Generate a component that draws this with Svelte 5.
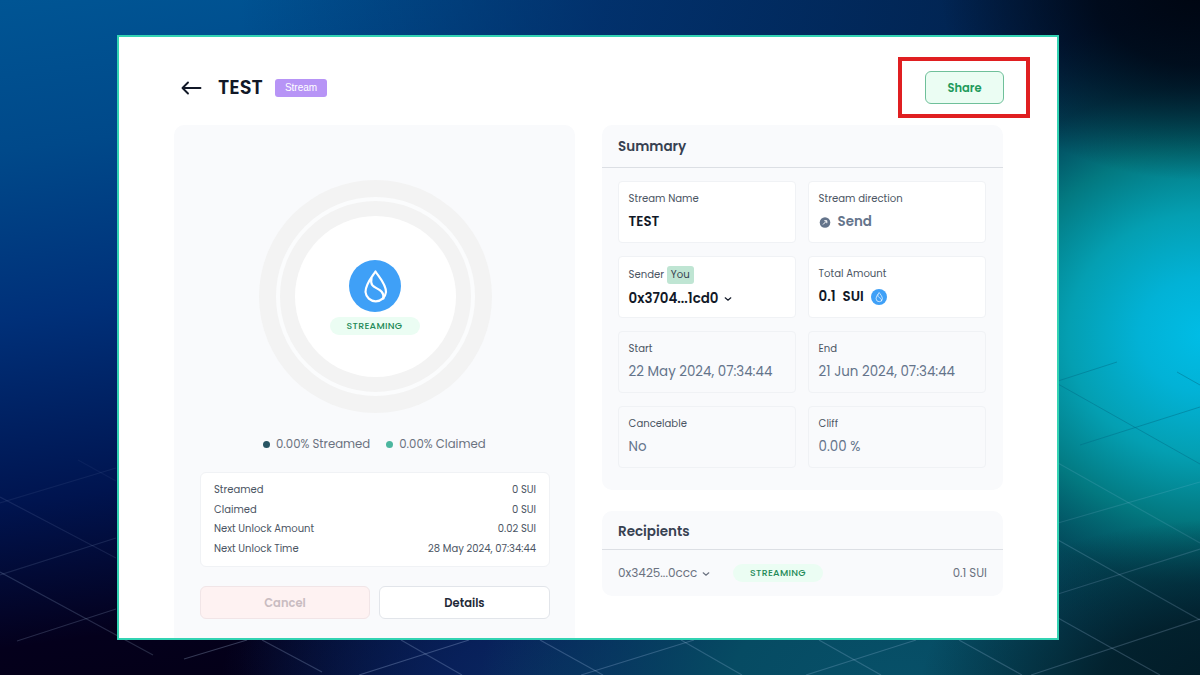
<script lang="ts">
  const details = [
    { label: "Streamed", value: "0 SUI" },
    { label: "Claimed", value: "0 SUI" },
    { label: "Next Unlock Amount", value: "0.02 SUI" },
    { label: "Next Unlock Time", value: "28 May 2024, 07:34:44" },
  ];

  const schedule = [
    { label: "Start", value: "22 May 2024, 07:34:44" },
    { label: "End", value: "21 Jun 2024, 07:34:44" },
    { label: "Cancelable", value: "No" },
    { label: "Cliff", value: "0.00 %" },
  ];

  // floor grid of the backdrop, fading out towards the horizon
  const gridLines = [
    [0, 503, 116, 468, 0.07],
    [0, 575, 116, 538, 0.12],
    [17, 641, 116, 609, 0.18],
    [78, 460, 116, 481, 0.05],
    [0, 497, 116, 558, 0.1],
    [0, 572, 153, 655, 0.18],
    [262, 640, 322, 672, 0.22],
    [401, 640, 462, 675, 0.22],
    [540, 640, 603, 675, 0.22],
    [681, 640, 742, 675, 0.2],
    [819, 640, 881, 675, 0.2],
    [959, 640, 1022, 675, 0.2],
    [184, 659, 247, 640, 0.25],
    [359, 675, 469, 640, 0.25],
    [581, 675, 694, 640, 0.22],
    [806, 675, 916, 640, 0.2],
    [1031, 675, 1200, 619, 0.2],
    [1058, 523, 1200, 482, 0.12],
    [1058, 594, 1200, 549, 0.16],
    [1058, 463, 1200, 543, 0.12],
    [1058, 540, 1200, 620, 0.18],
    [1058, 618, 1160, 675, 0.2],
  ];
  const darkLines = [
    [1058, 381, 1117, 362],
    [1080, 445, 1200, 407],
    [1058, 384, 1200, 464],
    [1177, 372, 1200, 385],
  ];
</script>

{#snippet suiLogo(size)}
  <svg width={size} height={size} viewBox="0 0 52 52" fill="none">
    <circle cx="26" cy="26" r="26" fill="#3fa0f7" />
    <path
      d="M26.500 11.500C23 17 16.500 24 16.500 32A10.300 10.300 0 0 0 37 32C37 24 30 17 26.500 11.500Z"
      stroke="#fff"
      stroke-width="2.200"
      stroke-linejoin="round"
    />
    <path
      d="M22.500 18.500C19.500 31 35.500 25.500 34.500 38.500"
      stroke="#fff"
      stroke-width="2.200"
      stroke-linecap="round"
    />
  </svg>
{/snippet}

{#snippet chevron()}
  <svg class="chevron" width="8" height="6" viewBox="0 0 8 6" fill="none">
    <path d="M1.200 1.800L4 4.300L6.800 1.800" stroke="currentColor" stroke-width="1.200" stroke-linecap="round" />
  </svg>
{/snippet}

<div class="stage">
  <svg class="grid-lines" width="1200" height="675" viewBox="0 0 1200 675">
    {#each gridLines as [x1, y1, x2, y2, opacity]}
      <line {x1} {y1} {x2} {y2} stroke="#c4dcff" stroke-opacity={opacity} stroke-width="1.200" />
    {/each}
    {#each darkLines as [x1, y1, x2, y2]}
      <line {x1} {y1} {x2} {y2} stroke="#006b85" stroke-opacity="0.45" />
    {/each}
  </svg>

  <div class="window">
    <header>
      <svg width="21" height="14" viewBox="0 0 21 14" fill="none">
        <path d="M7 1.500L1.500 7L7 12.500M1.800 7H19.500" stroke="#111827" stroke-width="1.900" stroke-linecap="round" stroke-linejoin="round" />
      </svg>
      <h1>TEST</h1>
      <span class="badge">Stream</span>
      <div class="share-wrap">
        <button class="share">Share</button>
        <div class="highlight"></div>
      </div>
    </header>

    <main>
      <section class="card progress">
        <div class="ring">
          <div class="ring-inner">
            <div class="ring-center">
              {@render suiLogo(52)}
              <span class="pill">STREAMING</span>
            </div>
          </div>
        </div>
        <div class="legend">
          <span><i class="dot streamed"></i>0.00% Streamed</span>
          <span><i class="dot claimed"></i>0.00% Claimed</span>
        </div>
        <div class="details">
          {#each details as row}
            <div class="row">
              <span>{row.label}</span>
              <span class="amount">{row.value}</span>
            </div>
          {/each}
        </div>
        <div class="actions">
          <button class="cancel">Cancel</button>
          <button class="more">Details</button>
        </div>
      </section>

      <div class="right">
        <section class="card summary">
          <h2>Summary</h2>
          <div class="cells">
            <div class="cell white">
              <div class="label">Stream Name</div>
              <div class="strong">TEST</div>
            </div>
            <div class="cell white">
              <div class="label">Stream direction</div>
              <div class="strong send">
                <svg width="12" height="12" viewBox="0 0 12 12" fill="none">
                  <circle cx="6" cy="6.500" r="5.300" fill="#64748b" />
                  <path d="M4 8.500L7.500 5M5.300 4.700H7.800V7.200" stroke="#fff" stroke-width="1" />
                </svg>
                Send
              </div>
            </div>
            <div class="cell white sender">
              <div class="label">Sender <span class="you">You</span></div>
              <div class="strong address">0x3704...1cd0 {@render chevron()}</div>
            </div>
            <div class="cell white">
              <div class="label">Total Amount</div>
              <div class="strong total"><span>0.1</span><span>SUI</span>{@render suiLogo(16)}</div>
            </div>
            {#each schedule as item}
              <div class="cell">
                <div class="label">{item.label}</div>
                <div class="plain">{item.value}</div>
              </div>
            {/each}
          </div>
        </section>

        <section class="card recipients">
          <h2>Recipients</h2>
          <div class="recipient">
            <span class="wallet">0x3425...0ccc {@render chevron()}</span>
            <span class="pill">STREAMING</span>
            <span class="sum">0.1 SUI</span>
          </div>
        </section>
      </div>
    </main>
  </div>
</div>

<style>
  :global(body) {
    margin: 0;
    overflow: hidden;
  }
  .stage {
    box-sizing: border-box;
    position: relative;
    width: 1200px;
    height: 675px;
    padding: 35px 0 0 117px;
    overflow: hidden;
    font-family: Poppins, Inter, sans-serif;
    color: #4b5563;
    background:
      radial-gradient(ellipse 260px 190px at 1200px -10px, #000611 0%, rgba(0, 7, 20, 0.85) 40%, rgba(0, 8, 24, 0) 100%),
      radial-gradient(ellipse 300px 170px at 1220px 690px, #021c27 0%, rgba(2, 28, 38, 0.85) 40%, rgba(2, 30, 40, 0) 100%),
      radial-gradient(ellipse 360px 320px at 1205px 335px, #00bde6 0%, #02b2d6 18%, #049fb2 38%, rgba(3, 130, 134, 0.9) 58%, rgba(2, 95, 98, 0.5) 78%, rgba(2, 70, 80, 0) 100%),
      radial-gradient(ellipse 420px 220px at 900px 680px, #075068 0%, #064b63 40%, rgba(6, 60, 90, 0) 100%),
      radial-gradient(ellipse 320px 200px at 540px 690px, #09285f 0%, rgba(9, 34, 95, 0.85) 30%, rgba(9, 34, 95, 0) 100%),
      linear-gradient(90deg, rgba(2, 36, 95, 0) 20%, rgba(2, 42, 100, 0.8) 50%, rgba(1, 30, 70, 0.95) 92%),
      linear-gradient(172deg, #005594 0%, #00498a 18%, #003079 38%, #00144f 60%, #04001c 77%, #03000f 100%);
  }
  .grid-lines {
    position: absolute;
    left: 0;
    top: 0;
  }
  .window {
    box-sizing: border-box;
    position: relative;
    width: 941.5px;
    height: 605px;
    padding: 34px 52.5px 0 55px;
    border: 2px solid #33d3b3;
    overflow: hidden;
    background: #fff;
  }
  header {
    display: flex;
    align-items: center;
    height: 33px;
    padding-left: 7px;
  }
  h1 {
    margin: 0 10px 0 16px;
    width: 47px;
    font-size: 19.5px;
    line-height: 30px;
    font-weight: 600;
    color: #111827;
  }
  .badge {
    width: 52px;
    height: 18px;
    border-radius: 3px;
    background: #b794f6;
    color: #fff;
    font: 10px/18px "Liberation Sans", sans-serif;
    text-align: center;
  }
  button {
    box-sizing: border-box;
    height: 33px;
    padding: 1px 0 0;
    border-radius: 6px;
    font-family: inherit;
    font-size: 11.5px;
    font-weight: 600;
    cursor: pointer;
  }
  .share-wrap {
    position: relative;
    margin-left: auto;
    height: 33px;
  }
  .share {
    display: block;
    width: 79px;
    border: 1px solid #6fc09a;
    background: #ebfdf3;
    color: #219a5b;
  }
  .highlight {
    position: absolute;
    box-sizing: border-box;
    left: -27px;
    top: -14px;
    width: 132px;
    height: 61px;
    border: 4px solid #e01f21;
  }
  main {
    display: flex;
    gap: 27px;
    margin-top: 21px;
  }
  .card {
    box-sizing: border-box;
    width: 401px;
    border-radius: 10px;
    background: #f9fafc;
  }
  .progress {
    height: 530px;
    padding: 55px 25px 0 26px;
  }
  .ring {
    box-sizing: border-box;
    width: 233px;
    height: 233px;
    margin: 0 auto 0 59px;
    padding: 17px;
    border-radius: 50%;
    background: #f3f3f3;
  }
  .ring-inner {
    box-sizing: border-box;
    width: 199px;
    height: 199px;
    padding: 15px;
    border: 4px solid #fbfcfd;
    border-radius: 50%;
  }
  .ring-center {
    box-sizing: border-box;
    display: flex;
    flex-direction: column;
    align-items: center;
    width: 161px;
    height: 161px;
    padding: 44px 2px 0 0;
    border-radius: 50%;
    background: #fff;
  }
  .pill {
    width: 90px;
    height: 18px;
    border-radius: 9px;
    background: #ebfdf3;
    color: #238a58;
    font-size: 9.4px;
    line-height: 18px;
    font-weight: 500;
    letter-spacing: 0.3px;
    text-align: center;
  }
  .ring-center .pill {
    margin-top: 5px;
  }
  .legend {
    display: flex;
    gap: 16px;
    height: 20px;
    margin: 21px 0 0 63px;
    font-size: 11.7px;
    line-height: 20px;
    color: #6b7280;
    white-space: nowrap;
  }
  .legend span {
    display: flex;
    align-items: center;
  }
  .dot {
    width: 7px;
    height: 7px;
    margin-right: 6px;
    border-radius: 50%;
  }
  .dot.streamed {
    background: #285563;
  }
  .dot.claimed {
    background: #4cb69f;
  }
  .details {
    box-sizing: border-box;
    height: 95px;
    margin-top: 18px;
    padding: 7px 13px;
    border: 1px solid #f0f2f5;
    border-radius: 6px;
    background: #fff;
    font-size: 10px;
  }
  .row {
    display: flex;
    justify-content: space-between;
    line-height: 19.6px;
  }
  .actions {
    display: grid;
    grid-template-columns: 170px 171px;
    gap: 9px;
    margin-top: 19px;
  }
  .cancel {
    border: 1px solid #f1e5e7;
    background: #fef2f2;
    color: #c9bcc1;
  }
  .more {
    border: 1px solid #e2e5ea;
    background: #fff;
    color: #1f2937;
  }
  .summary {
    height: 365px;
  }
  h2 {
    box-sizing: border-box;
    height: 43px;
    margin: 0;
    padding-left: 16px;
    border-bottom: 1px solid #dcdfe4;
    font-size: 13.5px;
    line-height: 43px;
    font-weight: 600;
    color: #374151;
  }
  .cells {
    display: grid;
    grid-template-columns: 178px 178px;
    grid-auto-rows: 62px;
    gap: 13px 12px;
    padding: 13px 16px;
  }
  .cell {
    box-sizing: border-box;
    padding: 8px 10px 8px 9.6px;
    border: 1px solid #f0f2f5;
    border-radius: 4px;
  }
  .white {
    background: #fff;
  }
  .label {
    height: 16px;
    font-size: 10.1px;
    line-height: 17px;
    white-space: nowrap;
  }
  .strong,
  .plain {
    display: flex;
    align-items: center;
    height: 20px;
    margin-top: 6px;
    font-size: 13.4px;
    line-height: 20px;
    white-space: nowrap;
  }
  .strong {
    font-weight: 600;
    color: #111827;
  }
  .plain {
    color: #64748b;
  }
  .send {
    gap: 7px;
    color: #64748b;
  }
  .sender .label {
    margin-top: 1px;
  }
  .sender .strong {
    margin-top: 7px;
  }
  .you {
    display: inline-block;
    width: 27px;
    height: 18px;
    border-radius: 3px;
    background: #bfe5d3;
    color: #374151;
    line-height: 18px;
    text-align: center;
  }
  .chevron {
    margin-left: 6px;
  }
  .total {
    gap: 7px;
  }
  .recipients {
    height: 85px;
    margin-top: 21px;
  }
  .recipients h2 {
    height: 39px;
    line-height: 41px;
  }
  .recipient {
    display: flex;
    align-items: center;
    height: 46px;
    padding: 0 16px;
    font-size: 12px;
    color: #6b7280;
  }
  .wallet {
    width: 115px;
    white-space: nowrap;
  }
  .wallet .chevron,
  .wallet :global(.chevron) {
    margin-left: 1px;
  }
  .sum {
    margin-left: auto;
    font-size: 11.7px;
  }
</style>
